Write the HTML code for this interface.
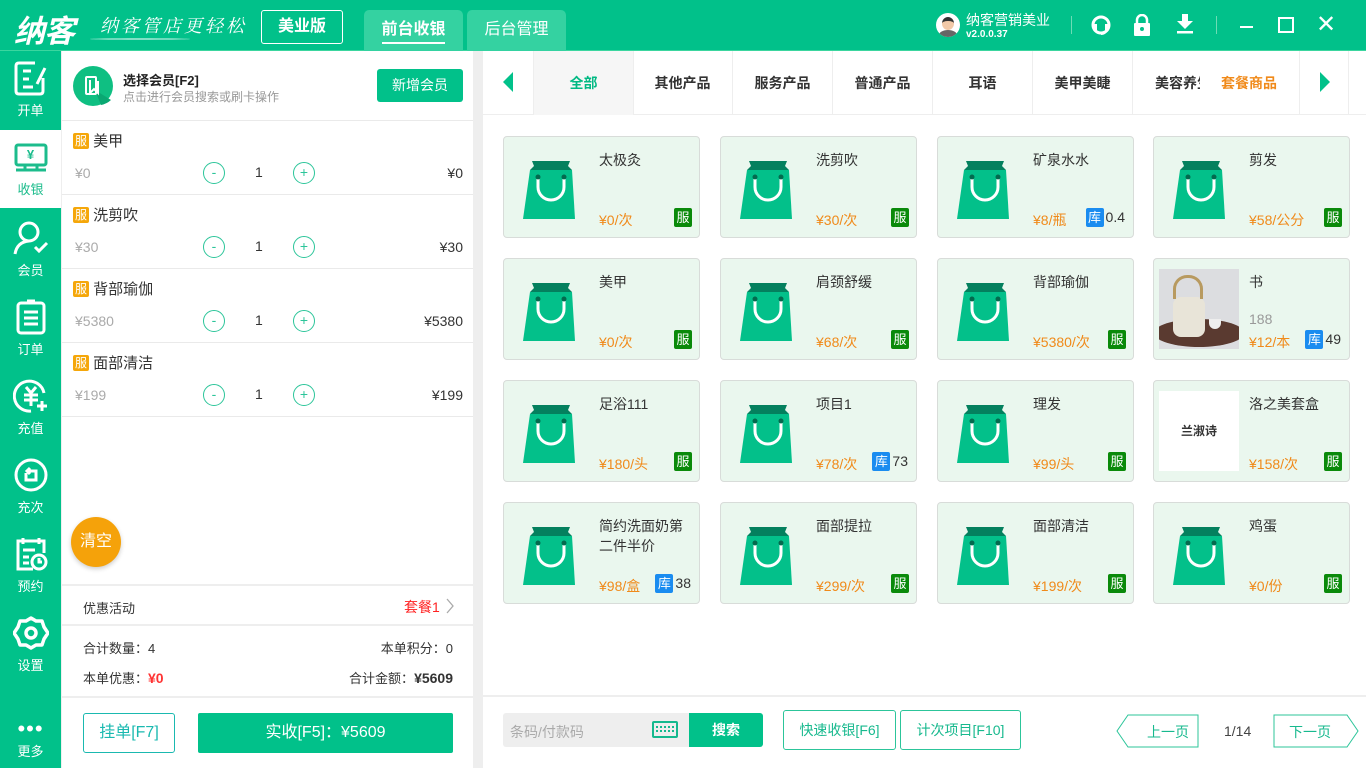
<!DOCTYPE html>
<html><head><meta charset="utf-8"><style>
*{margin:0;padding:0;box-sizing:border-box}
body{width:1366px;height:768px;overflow:hidden;font-family:"Liberation Sans","Noto Sans CJK SC",sans-serif;background:#eee;position:relative;color:#333}
.abs{position:absolute}
.hdr{left:0;top:0;width:1366px;height:51px;background:#01c18a;border-bottom:1px solid #3bd69f}
.side{left:0;top:51px;width:61px;height:717px;background:#01c18a}
.si{position:absolute;left:0;width:61px;text-align:center;color:#fff;font-size:13px}
.si svg{display:block;margin:0 auto}
.lp{left:62px;top:51px;width:411px;height:717px;background:#fff}
.rp{left:483px;top:51px;width:883px;height:717px;background:#fff}
.item{position:absolute;left:62px;width:411px;height:74px;border-bottom:1px solid #eaeaea}
.tag{display:inline-block;width:16px;height:16px;background:#f5a70a;color:#fff;font-size:12px;line-height:16px;text-align:center;border-radius:2px;vertical-align:1px}
.circ{position:absolute;width:22px;height:22px;border:1px solid #2cc59a;border-radius:50%;color:#2cc59a;font-size:14px;line-height:19px;text-align:center}
.card{position:absolute;width:197px;height:102px;background:#eaf7ee;border:1px solid #d8dcd9;border-radius:4px}
.card .nm{position:absolute;left:95px;top:13px;font-size:14px;color:#333;line-height:20px;width:95px}
.card .pr{position:absolute;left:95px;top:73px;font-size:14px;color:#f08a1a}
.card .fu{position:absolute;right:7px;top:71px;width:18px;height:19px;background:#0a8a0a;color:#fff;font-size:13px;line-height:19px;text-align:center;border-radius:2px}
.card .ku{position:absolute;right:8px;top:71px;font-size:14px;color:#333}
.card .ku b{display:inline-block;width:18px;height:19px;background:#1a8cf0;color:#fff;font-weight:normal;font-size:13px;line-height:19px;text-align:center;border-radius:2px;margin-right:2px}
.card svg{position:absolute;left:17px;top:24px}
.tab{position:absolute;top:51px;height:64px;width:100px;line-height:64px;text-align:center;font-size:14px;font-weight:bold;color:#333;border-right:1px solid #eee}
.btn{position:absolute;border:1px solid #2cc59a;border-radius:3px;color:#17b98e;font-size:14px;text-align:center;background:#fff}
</style></head><body>
<div class="abs hdr"></div>
<div class="abs" style="left:14px;top:6px;color:#fff;font-size:31px;font-weight:bold;font-style:italic;letter-spacing:-1px">纳客</div>
<div class="abs" style="left:100px;top:12px;color:#fff;font-size:18px;font-style:italic;font-family:'Noto Serif CJK SC',serif;letter-spacing:3px">纳客管店更轻松</div>
<div class="abs" style="left:90px;top:38px;width:100px;height:2px;background:rgba(255,255,255,.5);border-radius:50%"></div>
<div class="abs" style="left:261px;top:10px;width:82px;height:34px;border:1px solid #fff;border-radius:3px;color:#fff;font-size:16px;font-weight:bold;text-align:center;line-height:32px">美业版</div>
<div class="abs" style="left:364px;top:10px;width:99px;height:41px;background:#34d2a1;border-radius:5px 5px 0 0;color:#fff;font-size:16px;font-weight:bold;text-align:center;line-height:40px">前台收银</div>
<div class="abs" style="left:382px;top:42px;width:63px;height:2px;background:#fff"></div>
<div class="abs" style="left:467px;top:10px;width:99px;height:41px;background:#34d2a1;border-radius:5px 5px 0 0;color:#fff;font-size:16px;text-align:center;line-height:40px">后台管理</div>
<div class="abs" style="left:936px;top:13px;width:24px;height:24px;border-radius:50%;background:#fff;overflow:hidden"><div style="position:absolute;left:6px;top:4px;width:12px;height:13px;border-radius:50%;background:#f2c9a8;border-top:4px solid #333"></div><div style="position:absolute;left:3px;top:17px;width:18px;height:10px;border-radius:50%;background:#666"></div></div>
<div class="abs" style="left:966px;top:10px;color:#fff;font-size:14px">纳客营销美业</div>
<div class="abs" style="left:966px;top:29px;color:#fff;font-size:10px;font-weight:bold">v2.0.0.37</div>
<div class="abs" style="left:1071px;top:16px;width:1px;height:18px;background:#6ddcb5"></div>
<div class="abs" style="left:1216px;top:16px;width:1px;height:18px;background:#6ddcb5"></div>
<svg class="abs" style="left:1089px;top:13px" width="24" height="24" viewBox="0 0 24 24"><circle cx="12" cy="12" r="8" fill="none" stroke="#fff" stroke-width="3"/><path d="M4 11h4v6H4zM16 11h4v6h-4z" fill="#fff"/><path d="M18 17q-2 4-6 4" stroke="#fff" stroke-width="2" fill="none"/></svg>
<svg class="abs" style="left:1133px;top:14px" width="18" height="22" viewBox="0 0 18 22"><path d="M4 10V6a5 5 0 0 1 10 0v4" stroke="#fff" stroke-width="2.5" fill="none"/><rect x="1" y="9" width="16" height="13" rx="1" fill="#fff"/><circle cx="9" cy="15" r="2" fill="#01c18a"/></svg>
<svg class="abs" style="left:1176px;top:14px" width="18" height="20" viewBox="0 0 18 20"><path d="M6 0h6v7h5l-8 8-8-8h5z" fill="#fff"/><rect x="1" y="17" width="16" height="2.5" fill="#fff"/></svg>
<div class="abs" style="left:1240px;top:26px;width:13px;height:2px;background:#fff"></div>
<div class="abs" style="left:1278px;top:17px;width:16px;height:16px;border:2px solid #fff"></div>
<div class="abs" style="left:1316px;top:10px;color:#fff;font-size:24px;line-height:30px">✕</div>

<div class="abs side"></div>
<div class="abs" style="left:0;top:130px;width:61px;height:78px;background:#fff"></div>
<div class="si" style="top:60px"><svg width="36" height="36" viewBox="0 0 36 36" fill="none" stroke="#fff" stroke-width="3"><path d="M30 18v13q0 3-3 3H6q-3 0-3-3V6q0-3 3-3h16"/><path d="M10 11h8M10 19h6M10 27h10M24 24l8-16"/></svg><div style="margin-top:4px">开单</div></div>
<div class="si" style="top:143px;color:#1cbc8c"><svg width="36" height="30" viewBox="0 0 36 30" fill="none" stroke="#1cbc8c" stroke-width="3"><rect x="3" y="2" width="30" height="20" rx="2"/><path d="M3 27h30M12 22v5M24 22v5"/></svg><div style="position:absolute;left:0;top:4px;width:61px;font-size:13px;font-weight:bold">¥</div><div style="margin-top:6px">收银</div></div>
<div class="si" style="top:220px"><svg width="36" height="36" viewBox="0 0 36 36" fill="none" stroke="#fff" stroke-width="3"><circle cx="16" cy="12" r="9"/><path d="M2 34q2-12 14-13M22 27l4 4 8-8"/></svg><div style="margin-top:4px">会员</div></div>
<div class="si" style="top:299px"><svg width="36" height="36" viewBox="0 0 36 36" fill="none" stroke="#fff" stroke-width="3"><rect x="5" y="4" width="26" height="30" rx="3"/><path d="M11 13h14M11 19h14M11 25h14"/><path d="M14 3h8" stroke-width="5"/></svg><div style="margin-top:4px">订单</div></div>
<div class="si" style="top:378px"><svg width="36" height="36" viewBox="0 0 36 36" fill="none" stroke="#fff" stroke-width="3"><path d="M31 15A15 15 0 1 0 18 33"/><path d="M13 9l5 6 5-6M11 17h14M11 22h14M18 15v13M24 28h10M29 23v10"/></svg><div style="margin-top:4px">充值</div></div>
<div class="si" style="top:457px"><svg width="36" height="36" viewBox="0 0 36 36" fill="none" stroke="#fff" stroke-width="3"><circle cx="18" cy="18" r="15"/><path d="M13 16v7h10v-9h-7M17 11l-3 3 3 3"/></svg><div style="margin-top:4px">充次</div></div>
<div class="si" style="top:536px"><svg width="36" height="36" viewBox="0 0 36 36" fill="none" stroke="#fff" stroke-width="3"><path d="M20 33H5V5h26v12M10 2v6M26 2v6M10 14h12M10 21h6M10 27h6"/><circle cx="26" cy="26" r="7"/><path d="M26 22v4h3"/></svg><div style="margin-top:4px">预约</div></div>
<div class="si" style="top:615px"><svg width="36" height="36" viewBox="0 0 36 36" fill="none" stroke="#fff" stroke-width="3.5"><path d="M18 3l5 3 6 0 2 6 4 6-4 6-2 6-6 0-5 3-5-3-6 0-2-6-4-6 4-6 2-6 6 0z" stroke-linejoin="round"/><circle cx="18" cy="18" r="5"/></svg><div style="margin-top:4px">设置</div></div>
<div class="si" style="top:722px"><div style="font-size:22px;line-height:14px;letter-spacing:1px">•••</div><div style="margin-top:5px">更多</div></div>

<div class="abs lp"></div>
<svg class="abs" style="left:73px;top:66px" width="40" height="40" viewBox="0 0 40 40"><circle cx="20" cy="20" r="20" fill="#0fbf82"/><path d="M22 24l16 10a20 20 0 0 1-10 5z" fill="#0aa872"/><rect x="13" y="11" width="10" height="17" rx="1" fill="none" stroke="#fff" stroke-width="2"/><path d="M17 14v13l4-4 4 4V15" stroke="#fff" stroke-width="2" fill="none"/></svg>
<div class="abs" style="left:123px;top:70px;font-size:13px;font-weight:bold;color:#222">选择会员[F2]</div>
<div class="abs" style="left:123px;top:88px;font-size:12px;color:#999">点击进行会员搜索或刷卡操作</div>
<div class="abs" style="left:377px;top:69px;width:86px;height:33px;background:#01c18a;border-radius:3px;color:#fff;font-size:14px;line-height:33px;text-align:center">新增会员</div>
<div class="abs" style="left:62px;top:120px;width:411px;height:1px;background:#eaeaea"></div>

<div class="item" style="top:121px"><div class="abs" style="left:11px;top:9px;font-size:15px"><span class="tag">服</span> 美甲</div><div class="abs" style="left:13px;top:44px;color:#aaa;font-size:14px">¥0</div><div class="circ" style="left:141px;top:41px">-</div><div class="abs" style="left:193px;top:43px;font-size:14px">1</div><div class="circ" style="left:231px;top:41px">+</div><div class="abs" style="right:10px;top:44px;font-size:14px">¥0</div></div>
<div class="item" style="top:195px"><div class="abs" style="left:11px;top:9px;font-size:15px"><span class="tag">服</span> 洗剪吹</div><div class="abs" style="left:13px;top:44px;color:#aaa;font-size:14px">¥30</div><div class="circ" style="left:141px;top:41px">-</div><div class="abs" style="left:193px;top:43px;font-size:14px">1</div><div class="circ" style="left:231px;top:41px">+</div><div class="abs" style="right:10px;top:44px;font-size:14px">¥30</div></div>
<div class="item" style="top:269px"><div class="abs" style="left:11px;top:9px;font-size:15px"><span class="tag">服</span> 背部瑜伽</div><div class="abs" style="left:13px;top:44px;color:#aaa;font-size:14px">¥5380</div><div class="circ" style="left:141px;top:41px">-</div><div class="abs" style="left:193px;top:43px;font-size:14px">1</div><div class="circ" style="left:231px;top:41px">+</div><div class="abs" style="right:10px;top:44px;font-size:14px">¥5380</div></div>
<div class="item" style="top:343px"><div class="abs" style="left:11px;top:9px;font-size:15px"><span class="tag">服</span> 面部清洁</div><div class="abs" style="left:13px;top:44px;color:#aaa;font-size:14px">¥199</div><div class="circ" style="left:141px;top:41px">-</div><div class="abs" style="left:193px;top:43px;font-size:14px">1</div><div class="circ" style="left:231px;top:41px">+</div><div class="abs" style="right:10px;top:44px;font-size:14px">¥199</div></div>

<div class="abs" style="left:71px;top:517px;width:50px;height:50px;border-radius:50%;background:#f5a20a;color:#fff;font-size:16px;line-height:50px;text-align:center;box-shadow:0 2px 5px rgba(0,0,0,.2)">清空</div>
<div class="abs" style="left:62px;top:584px;width:411px;height:2px;background:#eee"></div>
<div class="abs" style="left:83px;top:598px;font-size:13px">优惠活动</div>
<div class="abs" style="left:404px;top:597px;font-size:14px;color:#f22">套餐1</div>
<svg class="abs" style="left:445px;top:597px" width="10" height="18"><path d="M2 2l6 7-6 7" stroke="#aaa" fill="none" stroke-width="1.3"/></svg>
<div class="abs" style="left:62px;top:624px;width:411px;height:2px;background:#eee"></div>
<div class="abs" style="left:83px;top:638px;font-size:13px">合计数量：4</div>
<div class="abs" style="right:913px;top:638px;font-size:13px">本单积分：0</div>
<div class="abs" style="left:83px;top:668px;font-size:13px">本单优惠：<b style="color:#f33;font-size:14px">¥0</b></div>
<div class="abs" style="right:913px;top:668px;font-size:13px">合计金额：<b style="font-size:14px">¥5609</b></div>
<div class="abs" style="left:62px;top:696px;width:411px;height:2px;background:#eee"></div>
<div class="btn" style="left:83px;top:713px;width:92px;height:40px;line-height:38px;font-size:16px;color:#1ab9b0;border-color:#1ab9b0">挂单[F7]</div>
<div class="abs" style="left:198px;top:713px;width:255px;height:40px;background:#01c18a;border-radius:2px;color:#fff;font-size:16px;line-height:40px;text-align:center">实收[F5]：¥5609</div>

<div class="abs rp"></div>
<div class="abs" style="left:483px;top:114px;width:883px;height:1px;background:#eee"></div>
<div class="abs" style="left:533px;top:51px;width:1px;height:64px;background:#eee"></div>
<div class="abs" style="left:503px;top:72px;width:0;height:0;border-top:10px solid transparent;border-bottom:10px solid transparent;border-right:10px solid #01c18a"></div>
<div class="tab" style="left:534px;background:#f6f6f6;color:#01b983">全部</div>
<div class="tab" style="left:633px">其他产品</div>
<div class="tab" style="left:733px">服务产品</div>
<div class="tab" style="left:833px">普通产品</div>
<div class="tab" style="left:933px">耳语</div>
<div class="tab" style="left:1033px">美甲美睫</div>
<div class="tab" style="left:1133px;width:67px;overflow:hidden;text-align:left;padding-left:22px;white-space:nowrap;border:none">美容养生</div>
<div class="abs" style="left:1221px;top:73px;font-size:14px;font-weight:bold;color:#f08a1a">套餐商品</div>
<div class="abs" style="left:1299px;top:51px;width:1px;height:64px;background:#eee"></div>
<div class="abs" style="left:1348px;top:51px;width:1px;height:64px;background:#eee"></div>
<div class="abs" style="left:1320px;top:72px;width:0;height:0;border-top:10px solid transparent;border-bottom:10px solid transparent;border-left:10px solid #01c18a"></div>

<svg width="0" height="0" style="position:absolute"><defs><g id="bag"><path d="M11 0h38l-2 5 4 4H9l4-4z" fill="#04805e"/><path d="M9 9h42l3 49H2z" fill="#03c08a"/><path d="M17 16v10a13 13 0 0 0 26 0v-10" stroke="#fff" stroke-width="3" fill="none"/><circle cx="17" cy="16" r="2.5" fill="#036a4e"/><circle cx="43" cy="16" r="2.5" fill="#036a4e"/></g></defs></svg>

<div class="card" style="left:503px;top:136px"><svg width="56" height="58"><use href="#bag"/></svg><div class="nm">太极灸</div><div class="pr">¥0/次</div><div class="fu">服</div></div>
<div class="card" style="left:720px;top:136px"><svg width="56" height="58"><use href="#bag"/></svg><div class="nm">洗剪吹</div><div class="pr">¥30/次</div><div class="fu">服</div></div>
<div class="card" style="left:937px;top:136px"><svg width="56" height="58"><use href="#bag"/></svg><div class="nm">矿泉水水</div><div class="pr">¥8/瓶</div><div class="ku"><b>库</b>0.4</div></div>
<div class="card" style="left:1153px;top:136px"><svg width="56" height="58"><use href="#bag"/></svg><div class="nm">剪发</div><div class="pr">¥58/公分</div><div class="fu">服</div></div>

<div class="card" style="left:503px;top:258px"><svg width="56" height="58"><use href="#bag"/></svg><div class="nm">美甲</div><div class="pr">¥0/次</div><div class="fu">服</div></div>
<div class="card" style="left:720px;top:258px"><svg width="56" height="58"><use href="#bag"/></svg><div class="nm">肩颈舒缓</div><div class="pr">¥68/次</div><div class="fu">服</div></div>
<div class="card" style="left:937px;top:258px"><svg width="56" height="58"><use href="#bag"/></svg><div class="nm">背部瑜伽</div><div class="pr">¥5380/次</div><div class="fu">服</div></div>
<div class="card" style="left:1153px;top:258px"><div class="abs" style="left:5px;top:10px;width:80px;height:80px;background:#dcdde0;overflow:hidden"><div class="abs" style="left:-5px;top:50px;width:90px;height:28px;border-radius:50%;background:#5a3a30"></div><div class="abs" style="left:14px;top:28px;width:32px;height:40px;border-radius:8px;background:#e8e4d8"></div><div class="abs" style="left:14px;top:6px;width:30px;height:24px;border:3px solid #b89a60;border-bottom:none;border-radius:14px 14px 0 0"></div><div class="abs" style="left:50px;top:50px;width:12px;height:10px;border-radius:0 0 6px 6px;background:#eee"></div></div><div class="nm">书</div><div class="abs" style="left:95px;top:52px;font-size:14px;color:#999">188</div><div class="pr">¥12/本</div><div class="ku"><b>库</b>49</div></div>

<div class="card" style="left:503px;top:380px"><svg width="56" height="58"><use href="#bag"/></svg><div class="nm">足浴111</div><div class="pr">¥180/头</div><div class="fu">服</div></div>
<div class="card" style="left:720px;top:380px"><svg width="56" height="58"><use href="#bag"/></svg><div class="nm">项目1</div><div class="pr">¥78/次</div><div class="ku"><b>库</b>73</div></div>
<div class="card" style="left:937px;top:380px"><svg width="56" height="58"><use href="#bag"/></svg><div class="nm">理发</div><div class="pr">¥99/头</div><div class="fu">服</div></div>
<div class="card" style="left:1153px;top:380px"><div class="abs" style="left:5px;top:10px;width:80px;height:80px;background:#fff;font-size:12px;font-weight:bold;line-height:80px;text-align:center">兰淑诗</div><div class="nm">洛之美套盒</div><div class="pr">¥158/次</div><div class="fu">服</div></div>

<div class="card" style="left:503px;top:502px"><svg width="56" height="58"><use href="#bag"/></svg><div class="nm">简约洗面奶第二件半价</div><div class="pr">¥98/盒</div><div class="ku"><b>库</b>38</div></div>
<div class="card" style="left:720px;top:502px"><svg width="56" height="58"><use href="#bag"/></svg><div class="nm">面部提拉</div><div class="pr">¥299/次</div><div class="fu">服</div></div>
<div class="card" style="left:937px;top:502px"><svg width="56" height="58"><use href="#bag"/></svg><div class="nm">面部清洁</div><div class="pr">¥199/次</div><div class="fu">服</div></div>
<div class="card" style="left:1153px;top:502px"><svg width="56" height="58"><use href="#bag"/></svg><div class="nm">鸡蛋</div><div class="pr">¥0/份</div><div class="fu">服</div></div>

<div class="abs" style="left:483px;top:695px;width:883px;height:2px;background:#eee"></div>
<div class="abs" style="left:503px;top:713px;width:186px;height:34px;background:#eee;border-radius:3px 0 0 3px"></div>
<div class="abs" style="left:510px;top:722px;font-size:14px;color:#aaa">条码/付款码</div>
<div class="abs" style="left:652px;top:721px;width:26px;height:17px;border:2px solid #14b98e;border-radius:2px"><div style="margin:3px 2px;border-top:2px dotted #14b98e;height:6px;border-bottom:2px dotted #14b98e"></div></div>
<div class="abs" style="left:689px;top:713px;width:74px;height:34px;background:#01c18a;border-radius:0 3px 3px 0;color:#fff;font-size:14px;font-weight:bold;line-height:34px;text-align:center">搜索</div>
<div class="btn" style="left:783px;top:710px;width:113px;height:40px;line-height:38px">快速收银[F6]</div>
<div class="btn" style="left:900px;top:710px;width:121px;height:40px;line-height:38px">计次项目[F10]</div>
<svg class="abs" style="left:1116px;top:714px" width="84" height="34"><path d="M12 1h70v32H12L1 17z" fill="#fff" stroke="#2cc59a"/><text x="52" y="23" font-size="14" fill="#17b98e" text-anchor="middle" font-family="Liberation Sans,Noto Sans CJK SC,sans-serif">上一页</text></svg>
<div class="abs" style="left:1224px;top:723px;font-size:14px;color:#444">1/14</div>
<svg class="abs" style="left:1273px;top:714px" width="90" height="34"><path d="M1 1h73l11 16-11 16H1z" fill="#fff" stroke="#2cc59a"/><text x="37" y="23" font-size="14" fill="#17b98e" text-anchor="middle" font-family="Liberation Sans,Noto Sans CJK SC,sans-serif">下一页</text></svg>
</body></html>
